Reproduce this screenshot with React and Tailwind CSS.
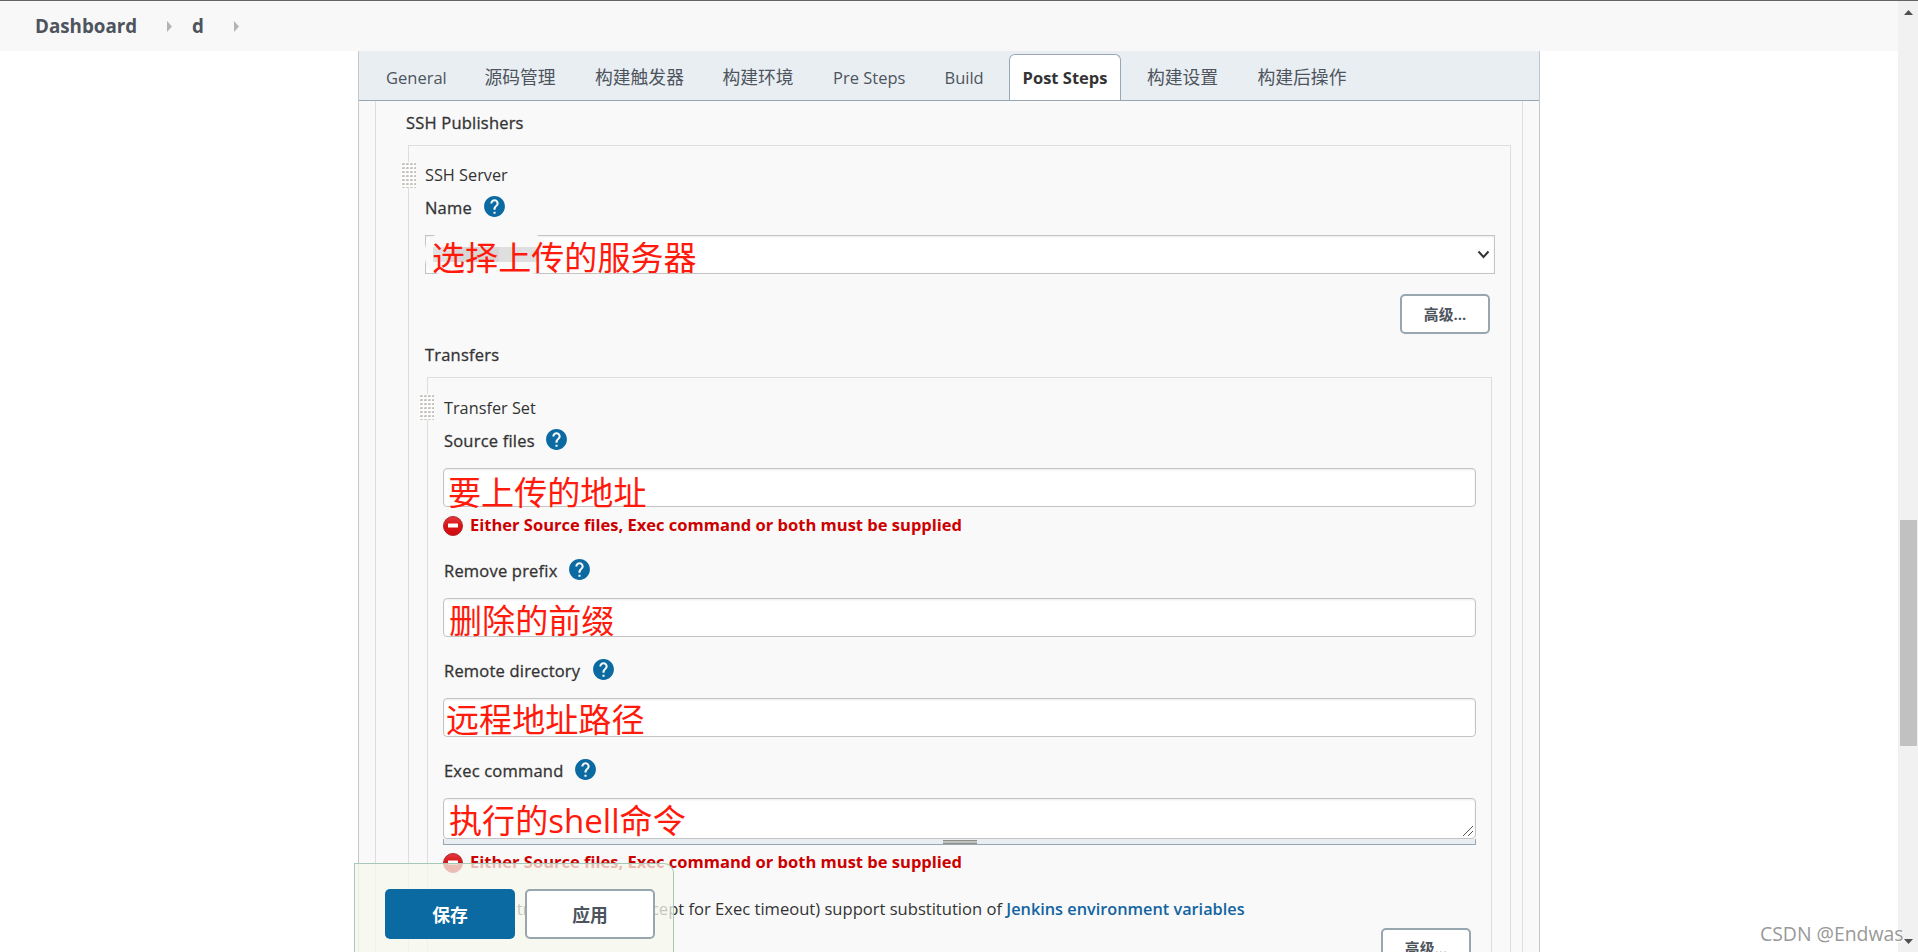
const tabs = [
  { label: 'General', className: 'w-[59px] text-[16.5px]' },
  { label: '源码管理', className: 'w-[71px] text-[17.8px]' },
  { label: '构建触发器', className: 'w-[88px] text-[17.8px]' },
  { label: '构建环境', className: 'w-[71px] text-[17.8px]' },
  { label: 'Pre Steps', className: 'w-[72px] text-[16.5px]' },
  { label: 'Build', className: 'w-[38px] text-[16.5px]' },
  { label: 'Post Steps', active: true },
  { label: '构建设置', className: 'w-[71px] text-[17.8px]' },
  { label: '构建后操作', className: 'w-[88px] text-[17.8px]' },
]

function HelpIcon() {
  return (
    <svg viewBox="0 0 24 24" className="w-[25px] h-[25px] -mt-[3px] text-[#0b6aa2]" fill="currentColor">
      <path d="M12 2C6.48 2 2 6.48 2 12s4.48 10 10 10 10-4.48 10-10S17.52 2 12 2zm1 17h-2v-2h2v2zm2.07-7.75l-.9.92C13.45 12.9 13 13.5 13 15h-2v-.5c0-1.1.45-2.1 1.17-2.83l1.24-1.26c.37-.36.59-.86.59-1.41 0-1.1-.9-2-2-2s-2 .9-2 2H8c0-2.21 1.79-4 4-4s4 1.79 4 4c0 .88-.36 1.68-.93 2.25z" />
    </svg>
  )
}

function Label({ text, help, className, width }) {
  return (
    <div className={`flex items-center h-6 text-[16.5px] leading-6 tracking-[0.2px] [-webkit-text-stroke:0.3px_#333333] ${className}`}>
      <span className={`-mt-px whitespace-nowrap ${width || ''}`}>{text}</span>
      {help && <HelpIcon />}
    </div>
  )
}

function Grip({ className }) {
  return (
    <svg className={`absolute top-[16px] w-[15px] h-[26px] ${className}`} shapeRendering="crispEdges">
      <defs>
        <pattern id="dots" width="4" height="4" patternUnits="userSpaceOnUse">
          <rect width="4" height="4" fill="#fcfcfc" />
          <rect x="1" y="1" width="3" height="2" fill="#d8d6d0" />
          <rect x="2" y="1" width="1" height="2" fill="#c3c1ba" />
          <rect x="1" y="2" width="1" height="1" fill="#c3c1ba" />
        </pattern>
      </defs>
      <rect width="15" height="26" fill="url(#dots)" />
    </svg>
  )
}

function Note({ children, className }) {
  return (
    <span className={`absolute whitespace-nowrap text-[33.1px] leading-[33px] text-[#ff1a0c] ${className}`}>
      {children}
    </span>
  )
}

function TextInput({ children }) {
  return (
    <div className="relative mt-[15px] h-[39px] rounded-[4px] border border-[#c4c4c4] bg-white shadow-[inset_0_1px_2px_rgba(0,0,0,0.08)]">
      {children}
    </div>
  )
}

function ErrorMessage({ className }) {
  return (
    <div className={`flex items-center h-6 leading-6 font-bold text-[#cc0000] ${className}`}>
      <svg viewBox="0 0 20 20" className="w-5 h-5 mt-[2px] mr-[7px]">
        <defs>
          <linearGradient id="stop" x1="0" y1="0" x2="0" y2="1">
            <stop offset="0" stopColor="#e53a3c" />
            <stop offset="0.45" stopColor="#d8161a" />
            <stop offset="1" stopColor="#cf0a0e" />
          </linearGradient>
        </defs>
        <circle cx="10" cy="10" r="9.5" fill="url(#stop)" stroke="#b3272a" />
        <rect x="5" y="7.5" width="10" height="4" rx="0.5" fill="#fff" />
      </svg>
      <span className="-mt-px whitespace-nowrap text-[16.52px]">Either Source files, Exec command or both must be supplied</span>
    </div>
  )
}

function AdvancedButton({ className }) {
  return (
    <button className={`block w-[90px] h-10 rounded-[5px] border-2 border-[#98a6b0] bg-white pt-px text-[14.8px] font-bold text-[#4d545d] ${className}`}>
      高级...
    </button>
  )
}

export default function App() {
  return (
    <div className="relative flex h-[952px] w-[1918px] overflow-hidden bg-white text-[16.3px] text-[#333333] font-['Open_Sans','Noto_Sans_CJK_SC',sans-serif]">
      <div className="flex flex-1 flex-col">
        <header className="flex h-[51px] shrink-0 items-center border-t border-[#666366] bg-[#f8f8f8] pl-[35px] text-[18.8px] font-bold text-[#4d545d]">
          <span className="w-[101px] mt-px">Dashboard</span>
          <svg className="ml-[31px] w-[5px] h-[11px]"><path d="M0 0L5 5.5L0 11Z" fill="#b4b4b4" /></svg>
          <span className="ml-5 w-3 mt-px">d</span>
          <svg className="ml-[30px] w-[5px] h-[11px]"><path d="M0 0L5 5.5L0 11Z" fill="#b4b4b4" /></svg>
        </header>

        <main className="ml-[358px] flex w-[1182px] flex-1 flex-col border-x border-[#c4c8ca] bg-[#f9f9f9]">
          <nav className="flex h-[50px] shrink-0 items-end border-b border-[#98a7b3] bg-[#e9eef2] pl-[27px] text-[#4d545d]">
            {tabs.map((tab) =>
              tab.active ? (
                <div key={tab.label} className="-ml-[13px] mr-[26px] w-[112px] h-[46px] rounded-t-[6px] border border-b-0 border-[#98a7b3] bg-white text-center text-[16.5px] leading-[45px] font-bold whitespace-nowrap text-[#333333]">
                  {tab.label}
                </div>
              ) : (
                <div key={tab.label} className={`mr-[39.5px] h-[46px] leading-[47px] whitespace-nowrap ${tab.className}`}>
                  {tab.label}
                </div>
              )
            )}
          </nav>

          <div className="mx-4 flex-1 border-x border-[#dedede]">
            <Label text="SSH Publishers" className="mt-[10px] ml-[30px]" />

            <section className="relative mt-[10px] ml-8 mr-[11px] h-[820px] border border-[#dedede] pt-[17px]">
              <Grip className="-left-[8px]" />
              <div className="ml-4 h-6 leading-6">SSH Server</div>
              <Label text="Name" help className="mt-[9px] ml-4" width="w-[57px]" />
              <div className="relative mt-[15px] ml-4 mr-[15px] h-[39px] border border-[#c4c4c4] bg-white shadow-[inset_0_1px_2px_rgba(0,0,0,0.08)]">
                <div className="absolute -top-[2px] -left-px h-[40px] w-[122px] rounded-[16px] bg-[#f9f9f9]" />
                <div className="absolute top-[11px] left-[7px] flex h-[15px]">
                  <div className="w-[18px] bg-[#e2e2e2]" />
                  <div className="w-[48px] bg-[#d6d6d6]" />
                  <div className="w-[40px] bg-[#dfdfdf]" />
                </div>
                <Note className="left-[6px] top-[5px]">选择上传的服务器</Note>
                <svg className="absolute right-[4px] top-[14px] w-[13px] h-[10px]" fill="none" stroke="#333" strokeWidth="2">
                  <path d="M1.5 1.5L6.5 7L11.5 1.5" />
                </svg>
              </div>
              <AdvancedButton className="mt-5 ml-auto mr-5" />
              <Label text="Transfers" className="mt-[9px] ml-4" />

              <section className="relative mt-[10px] ml-[18px] mr-[18px] h-[600px] border border-[#dedede] px-[15px] pt-[18px]">
                <Grip className="-left-[9px]" />
                <div className="h-6 pl-px leading-6">Transfer Set</div>
                <Label text="Source files" help className="mt-[9px] pl-px" width="w-[100px]" />
                <TextInput>
                  <Note className="left-[4px] top-[7px]">要上传的地址</Note>
                </TextInput>
                <ErrorMessage className="mt-[6px]" />
                <Label text="Remove prefix" help className="mt-[22px] pl-px" width="w-[123px]" />
                <TextInput>
                  <Note className="left-[5px] top-[5px]">删除的前缀</Note>
                </TextInput>
                <Label text="Remote directory" help className="mt-[22px] pl-px" width="w-[147px]" />
                <TextInput>
                  <Note className="left-[2px] top-[4px]">远程地址路径</Note>
                </TextInput>
                <Label text="Exec command" help className="mt-[22px] pl-px" width="w-[129px]" />
                <div className="relative mt-[15px] h-[41px] rounded-[4px] border border-[#c4c4c4] bg-white shadow-[inset_0_1px_2px_rgba(0,0,0,0.08)]">
                  <Note className="left-[5px] top-[5px]">执行的shell命令</Note>
                  <svg className="absolute right-[1px] bottom-[1px] w-[12px] h-[12px]" stroke="#555" strokeWidth="1">
                    <path d="M1 11L11 1M6 11L11 6" />
                  </svg>
                </div>
                <div className="flex h-[6px] justify-center border-x border-b border-[#98a7b3] bg-[#e9eef2]">
                  <div className="mt-px h-[4px] w-[34px] border-y border-[#8d918c] bg-[#c0c2c0]" />
                </div>
                <ErrorMessage className="mt-[5px]" />
                <div className="mt-[23px] h-6 pl-px text-[16.57px] leading-6 whitespace-nowrap">
                  All of the transfer fields (except for Exec timeout) support substitution of{' '}
                  <a className="text-[16.3px] font-semibold text-[#1264a0]">Jenkins environment variables</a>
                </div>
                <AdvancedButton className="mt-[7px] ml-auto mr-[5px]" />
              </section>
            </section>
          </div>
        </main>
      </div>

      <div className="flex w-5 shrink-0 flex-col border-t border-[#666366] bg-[#f1f1f1]">
        <svg className="mt-[9px] ml-[6px] w-[9px] h-[5px]"><path d="M0 5L4.5 0L9 5Z" fill="#505050" /></svg>
        <div className="mt-[505px] ml-[2px] h-[226px] w-[17px] bg-[#c1c1c1]" />
        <svg className="mt-[193px] ml-[6px] w-[9px] h-[5px]"><path d="M0 0L4.5 5L9 0Z" fill="#505050" /></svg>
      </div>

      {/* sticky save bar */}
      <div className="absolute left-[354px] top-[863px] flex h-[89px] w-[320px] gap-[10px] rounded-tr-[10px] border border-b-0 border-[#a6c8b6] bg-[#f5f7eb]/75 pl-[30px] pt-[25px] text-[17.8px] font-bold">
        <button className="w-[130px] h-[50px] rounded-[5px] bg-[#0b6aa2] pt-[3px] text-white">保存</button>
        <button className="w-[130px] h-[50px] rounded-[5px] border-2 border-[#98a6b0] bg-white pt-[3px] text-[#4d545d]">应用</button>
      </div>

      <span className="absolute left-[1760px] top-[920px] text-[19.4px] leading-7 whitespace-nowrap text-[#999999] [text-shadow:1px_1px_0_#ffffff]">
        CSDN @Endwas
      </span>
    </div>
  )
}
